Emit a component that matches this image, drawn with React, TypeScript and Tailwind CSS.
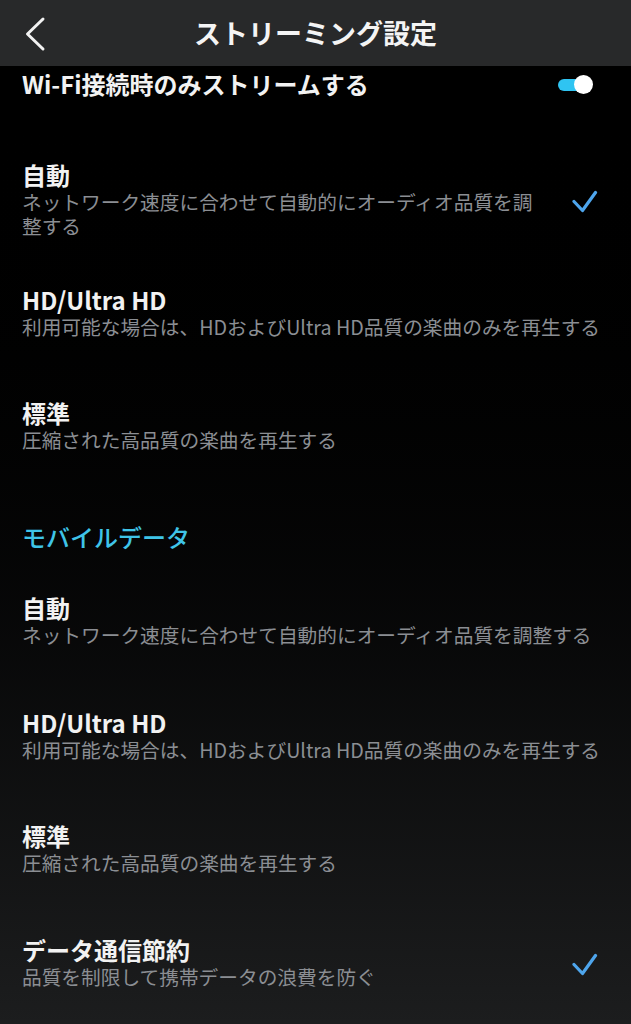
import React from "react";

const font = { fontFamily: '"Noto Sans CJK JP", "Noto Sans", sans-serif' };

function Check() {
  return (
    <svg width="26" height="24" viewBox="0 0 26 24" className="shrink-0">
      <path
        d="M2 12.5 L10.5 21.5 L23.5 3.5"
        fill="none"
        stroke="#4ea5ec"
        strokeWidth="3.2"
        strokeLinecap="round"
        strokeLinejoin="round"
      />
    </svg>
  );
}

interface OptionRowProps {
  title: string;
  desc: string;
  checked?: boolean;
  className?: string;
}

function OptionRow({ title, desc, checked = false, className = "" }: OptionRowProps) {
  return (
    <div className={`flex items-center pl-[22px] ${className}`}>
      <div className={checked ? "w-[520px]" : "flex-1 pr-1"}>
        <div className="text-[24px] leading-[28px] font-bold text-[#f2f2f2]">{title}</div>
        <div className="mt-px text-[19.7px] leading-[24px] text-[#8b8e93]">{desc}</div>
      </div>
      {checked && (
        <div className="ml-[30px] mt-[2px]">
          <Check />
        </div>
      )}
    </div>
  );
}

export default function App() {
  return (
    <div
      className="w-[631px] h-[1024px] overflow-hidden bg-gradient-to-b from-black from-[8%] to-[#1c1d1e]"
      style={font}
    >
      {/* Header */}
      <div className="grid grid-cols-[66px_1fr_66px] items-center h-[66px] bg-[#28292a]">
        <div className="pl-[24px] pt-[1px]">
          <svg width="24" height="36" viewBox="0 0 24 36">
            <path
              d="M19 3 L3.5 18 L19 33"
              fill="none"
              stroke="#f2f2f2"
              strokeWidth="3"
              strokeLinecap="round"
              strokeLinejoin="round"
            />
          </svg>
        </div>
        <div className="text-center text-[27px] leading-[34px] font-bold text-[#f4f4f4]">
          ストリーミング設定
        </div>
        <div />
      </div>

      {/* Wi-Fi only */}
      <div className="flex items-center justify-between h-[36px] pl-[22px] pr-[38px]">
        <span className="text-[24px] leading-[28px] font-bold text-[#f2f2f2]">
          Wi-Fi接続時のみストリームする
        </span>
        <div className="relative w-[35px] h-[19px]">
          <div className="absolute left-0 top-[4px] w-[30px] h-[12px] rounded-full bg-[#2fc4f2]" />
          <div className="absolute right-0 top-0 w-[19px] h-[19px] rounded-full bg-white" />
        </div>
      </div>

      <OptionRow
        className="mt-[59px]"
        title="自動"
        desc="ネットワーク速度に合わせて自動的にオーディオ品質を調整する"
        checked
      />
      <OptionRow
        className="mt-[48px]"
        title="HD/Ultra HD"
        desc="利用可能な場合は、HDおよびUltra HD品質の楽曲のみを再生する"
      />
      <OptionRow className="mt-[60px]" title="標準" desc="圧縮された高品質の楽曲を再生する" />

      <div className="mt-[71px] pl-[22px] text-[24px] leading-[28px] font-medium text-[#3fc4e8]">
        モバイルデータ
      </div>

      <OptionRow
        className="mt-[43px]"
        title="自動"
        desc="ネットワーク速度に合わせて自動的にオーディオ品質を調整する"
      />
      <OptionRow
        className="mt-[62px]"
        title="HD/Ultra HD"
        desc="利用可能な場合は、HDおよびUltra HD品質の楽曲のみを再生する"
      />
      <OptionRow className="mt-[60px]" title="標準" desc="圧縮された高品質の楽曲を再生する" />
      <OptionRow
        className="mt-[61px]"
        title="データ通信節約"
        desc="品質を制限して携帯データの浪費を防ぐ"
        checked
      />
    </div>
  );
}
